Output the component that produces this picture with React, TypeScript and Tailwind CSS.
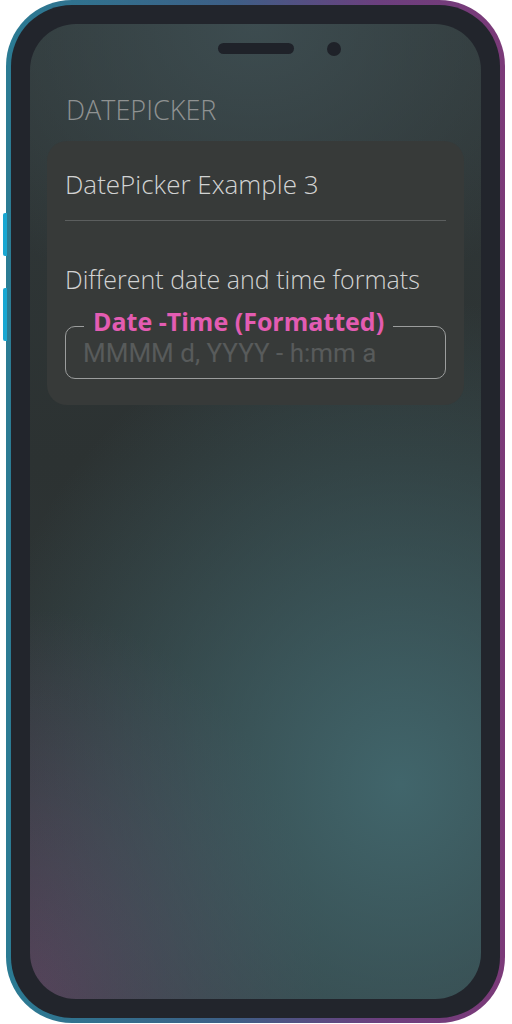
import React from 'react';

const font = { fontFamily: '"Open Sans", Lato, sans-serif' };

function SideButtons() {
  return (
    <>
      <div className="absolute left-[3px] top-[213px] h-[43px] w-[4px] rounded-l-[2px] bg-[#19a7d2]" />
      <div className="absolute left-[3px] top-[288px] h-[53px] w-[4px] rounded-l-[2px] bg-[#19a7d2]" />
    </>
  );
}

function Notch() {
  return (
    <div className="flex h-[48px] items-center justify-center gap-[33px] pl-[48px] pt-[1px]">
      <div className="h-[11px] w-[76px] rounded-full bg-[#1f2229]" />
      <div className="h-[14px] w-[14px] rounded-full bg-[#1f2229]" />
    </div>
  );
}

function FormattedInput() {
  return (
    <div className="relative flex h-[53px] items-center rounded-[10px] border border-[#9b9d9d] pl-[17px]">
      <span className="absolute left-[18px] top-[-20px] bg-[#373a39] px-[9px] text-[25px] font-bold leading-[28px] text-[#e35cb2]">
        Date -Time (Formatted)
      </span>
      <span
        className="text-[26px] leading-[30px] text-[#585b5b]"
        style={{ fontFamily: 'Roboto, sans-serif' }}
      >
        MMMM d, YYYY - h:mm a
      </span>
    </div>
  );
}

export default function App() {
  return (
    <div className="relative h-[1024px] w-[512px] bg-white" style={font}>
      <SideButtons />
      <div className="ml-[6px] h-[1023px] w-[499px] rounded-[66px] bg-[linear-gradient(90deg,#2b7b93_0%,#3d5f86_45%,#6c3f7e_75%,#7b3a78_100%)] p-[5px]">
        <div className="h-full w-full rounded-[61px] bg-[#22252c] p-[19px]">
          <div className="h-full w-full overflow-hidden rounded-[46px] bg-[radial-gradient(ellipse_95%_50%_at_82%_78%,rgba(66,104,110,0.95),transparent),radial-gradient(ellipse_65%_40%_at_0%_100%,rgba(90,66,92,0.9),transparent),radial-gradient(ellipse_80%_30%_at_50%_0%,rgba(62,78,82,0.9),transparent),linear-gradient(180deg,#303839_0%,#2c3232_45%,#303a3c_100%)]">
            <Notch />
            <div className="pl-[36px] pt-[22px] text-[27px] font-light leading-[32px] text-[#8f9292]">
              DATEPICKER
            </div>
            <div className="mx-[17px] mt-[15px] rounded-[20px] bg-[#373a39] px-[18px] pb-[26px]">
              <div className="flex h-[79px] items-center pt-[7px] text-[26px] font-light text-[#d2d3d3]">
                DatePicker Example 3
              </div>
              <div className="h-px bg-[#5b5e5e]" />
              <div className="mt-[43px] text-[25px] font-light leading-[30px] text-[#d2d3d3]">
                Different date and time formats
              </div>
              <div className="mt-[32px]">
                <FormattedInput />
              </div>
            </div>
          </div>
        </div>
      </div>
    </div>
  );
}
